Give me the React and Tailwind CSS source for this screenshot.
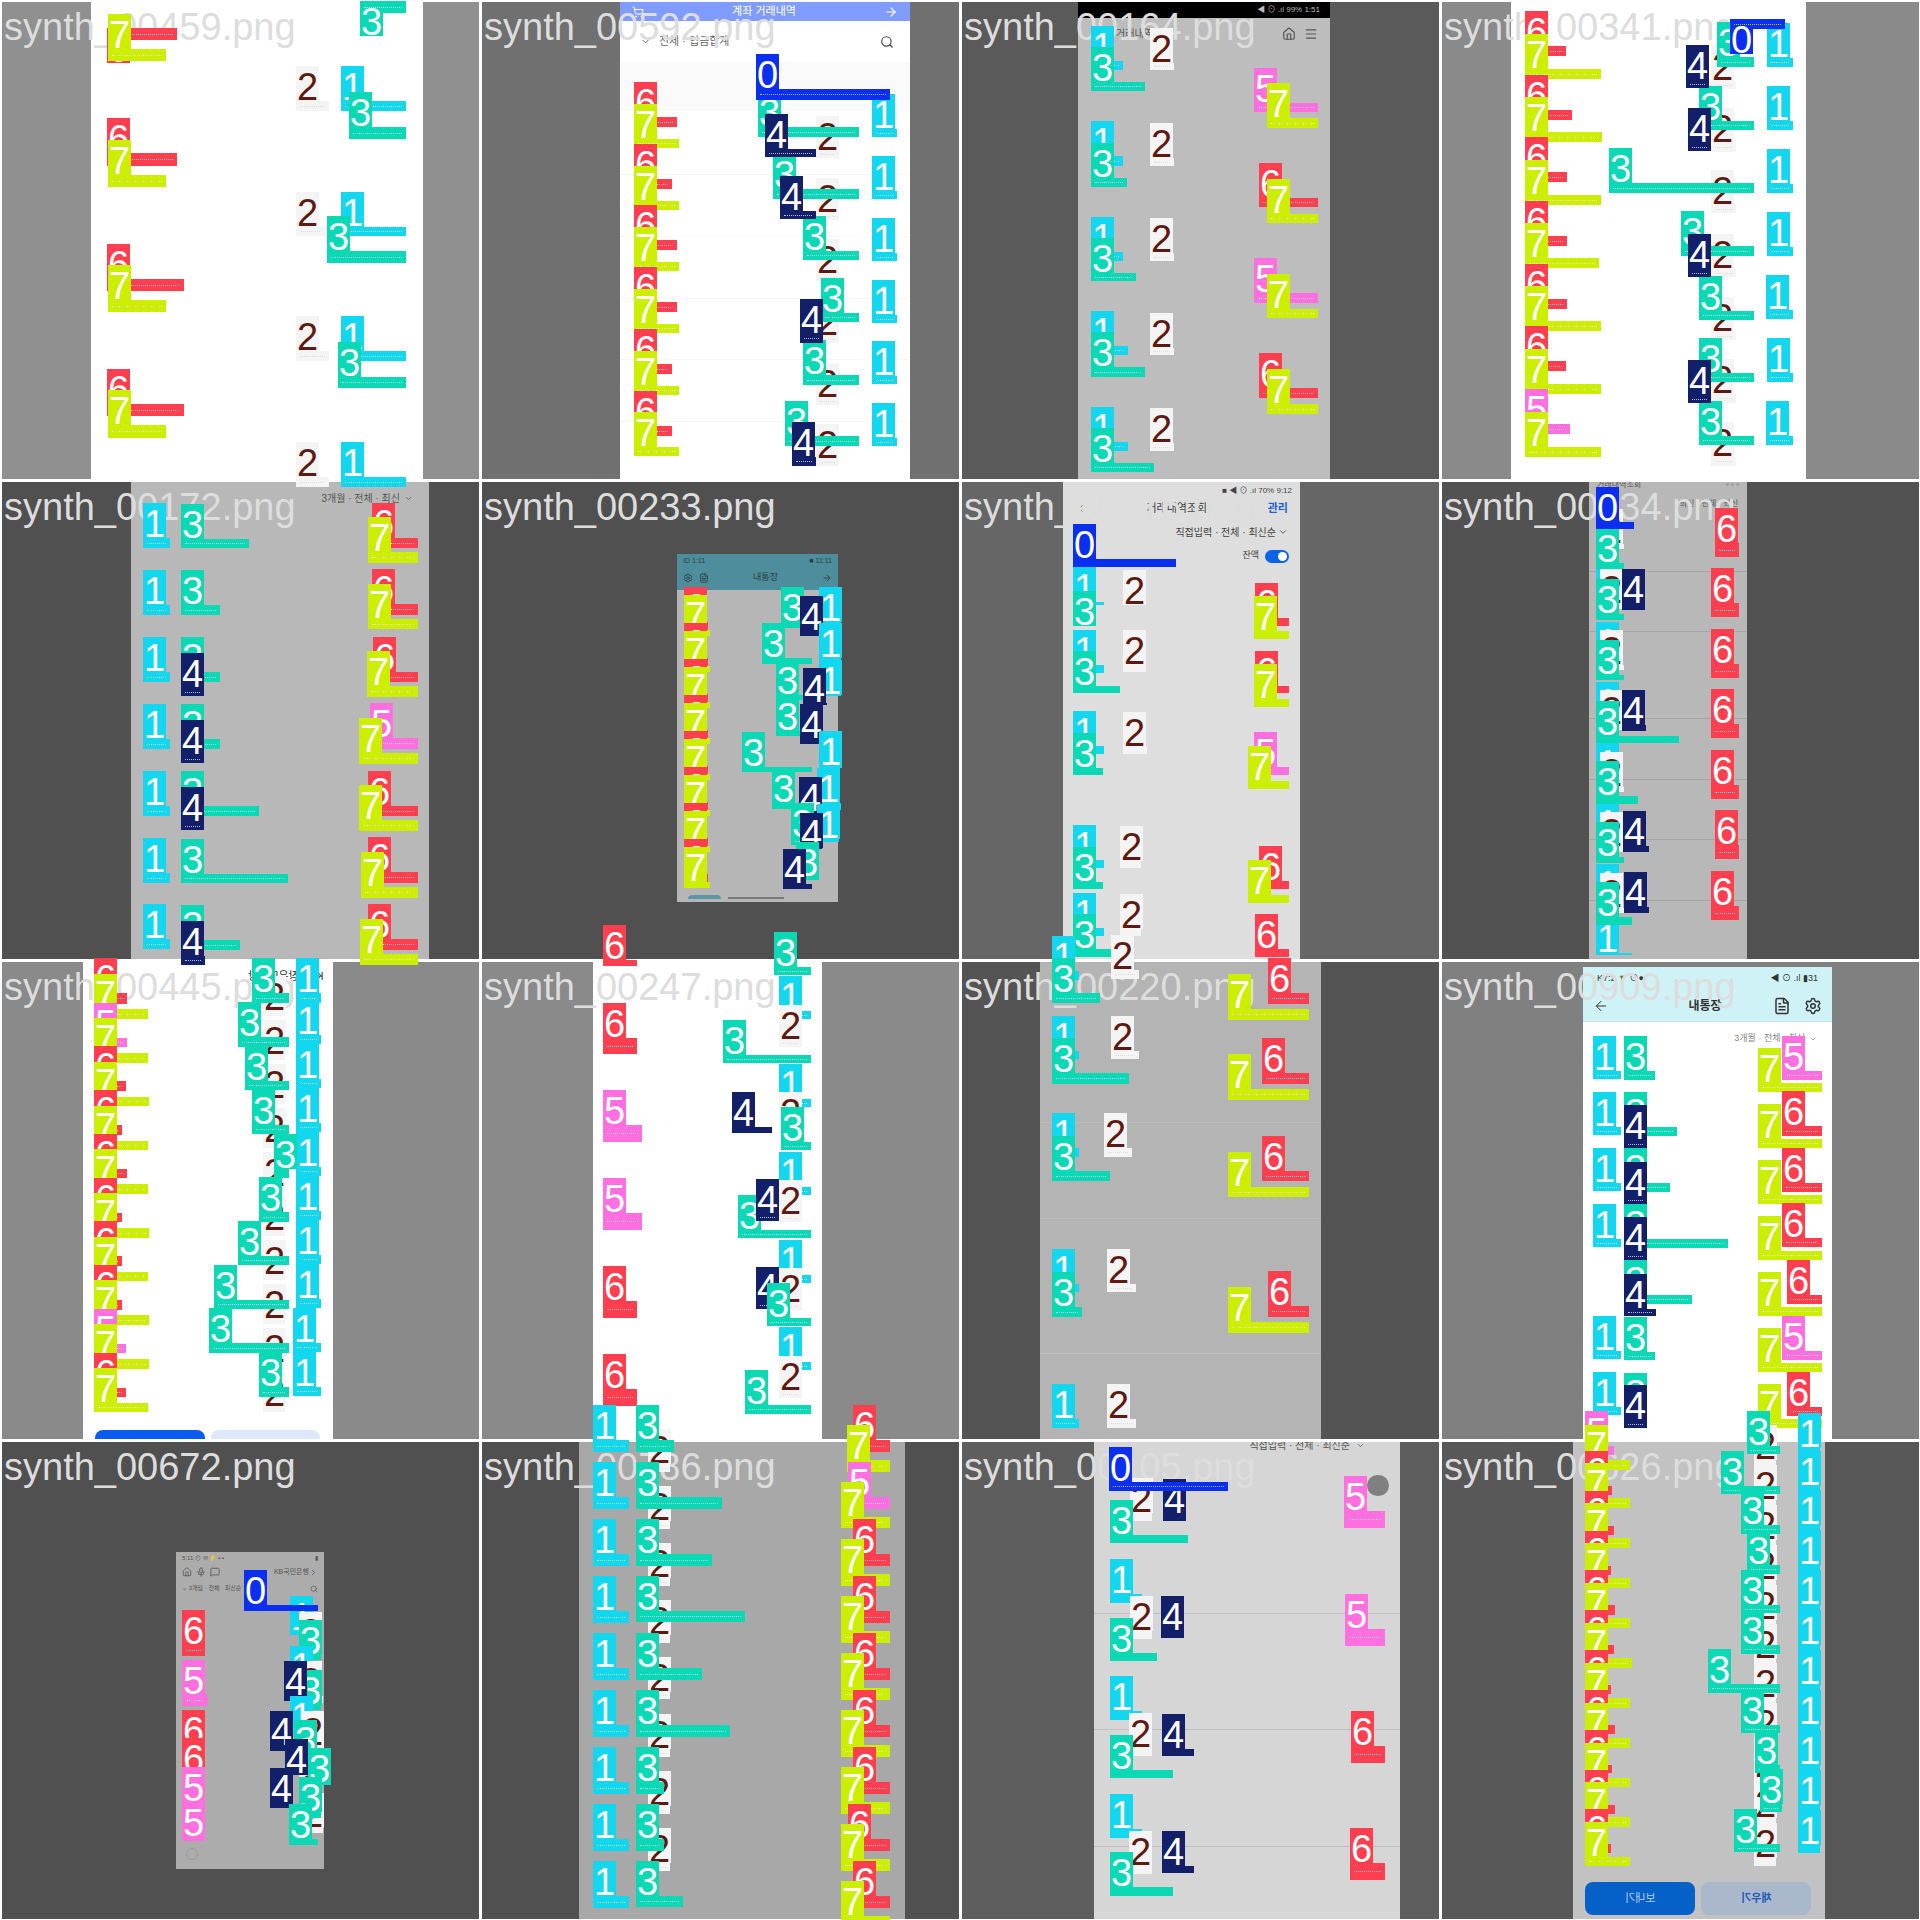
import React from "react";
import { Home, Menu, Search, ChevronDown, ChevronLeft, ChevronRight, ArrowLeft, ArrowRight, Settings, FileText, Mic, MessageSquare, ShoppingCart } from "lucide-react";

const COL = {
  0: "bg-[#0a2ff0] text-white",
  1: "bg-[#12d7ee] text-white",
  2: "bg-[#f4f4f4] text-[#5e1a10]",
  3: "bg-[#0bd9b5] text-white",
  4: "bg-[#132069] text-white",
  5: "bg-[#ff6fe0] text-white",
  6: "bg-[#ff3f50] text-white",
  7: "bg-[#ccee00] text-white",
};
const R = (n, x, tops, x2, h) => tops.map((t, i) => [n, Array.isArray(x) ? x[i] : x, t, Array.isArray(x2) ? x2[i] : x2, t + h]);
const Z = (a, b) => { const o = []; const m = Math.max(a.length, b.length); for (let i = 0; i < m; i++) { if (a[i]) o.push(a[i]); if (b[i]) o.push(b[i]); } return o; };

const GROUPS = [
  { ox: 0, oy: 0, sx: 3, ticks: () => true, L: [
    [6, 321, 85, 531, 122, 85], [7, 324, 42, 498, 182], [3, 1080, 3, 1218, 38, 3],
    [2, 888, 198, 987, 332], [1, 1023, 198, 1218, 332], [3, 1047, 276, 1218, 416],
    [6, 321, 354, 531, 497], [7, 324, 420, 498, 560],
    [2, 888, 576, 978, 708], [1, 1023, 576, 1218, 708], [3, 981, 648, 1218, 788],
    [6, 321, 732, 552, 872], [7, 324, 795, 498, 936],
    [2, 888, 948, 987, 1082], [1, 1023, 948, 1218, 1082], [3, 1014, 1026, 1218, 1163],
    [6, 321, 1107, 552, 1247], [7, 324, 1170, 498, 1313],
    [2, 888, 1326, 987, 1460], [1, 1023, 1326, 1218, 1460],
  ] },
  { ox: 480, oy: 0, sx: 3, ticks: () => true, L: [
    ...R(1, 1176, [282, 468, 654, 840, 1023, 1209], 1250, 128),
    ...R(2, 1008, [348, 534, 717, 903, 1089, 1272], 1078, 125),
    [3, 834, 276, 1137, 410], [3, 879, 462, 1137, 596], [3, 969, 648, 1137, 779], [3, 1023, 834, 1137, 965], [3, 969, 1020, 1137, 1154], [3, 915, 1203, 1137, 1337],
    [4, 855, 342, 1008, 470], [4, 900, 528, 1008, 656], [4, 960, 897, 1029, 1028], [4, 936, 1266, 1008, 1397],
    ...Z(R(6, 462, [246, 432, 615, 801, 987, 1173], [591, 576, 591, 591, 576, 576], 134), R(7, 462, [312, 498, 681, 867, 1053, 1236], 597, 133)),
    [0, 828, 162, 1230, 300],
  ] },
  { ox: 960, oy: 0, sx: 1.6333, ticks: () => true, L: [
    [1, 214, 78, 267, 210], [3, 214, 142, 302, 272], [2, 310, 84, 350, 210], [5, 480, 204, 585, 336], [7, 501, 248, 585, 383],
    [1, 214, 362, 267, 497], [3, 214, 428, 273, 560], [2, 310, 369, 350, 497], [6, 488, 489, 585, 621], [7, 501, 537, 585, 670],
    [1, 214, 651, 267, 783], [3, 214, 714, 287, 843], [2, 310, 654, 350, 783], [5, 480, 774, 585, 909], [7, 501, 822, 585, 953],
    [1, 214, 933, 274, 1065], [3, 214, 996, 302, 1130], [2, 310, 939, 350, 1065], [6, 488, 1059, 585, 1194], [7, 501, 1107, 585, 1241],
    [1, 214, 1221, 274, 1353], [3, 214, 1284, 317, 1415], [2, 310, 1224, 350, 1353],
    ...R(1, [1318, 1318, 1318, 1318, 1316, 1318, 1316], [69, 258, 447, 636, 825, 1014, 1203], 1361, 131),
    ...R(2, 1226, [137, 325, 510, 702, 890, 1078, 1267], 1267, 130),
    [3, 1236, 66, 1297, 200], [3, 1207, 258, 1297, 389], [3, 1060, 444, 1297, 578], [3, 1178, 633, 1297, 767], [3, 1207, 828, 1297, 959], [3, 1207, 1014, 1297, 1145], [3, 1207, 1203, 1297, 1334],
    [4, 1186, 135, 1224, 264], [4, 1189, 324, 1226, 453], [4, 1189, 702, 1226, 831], [4, 1189, 1080, 1226, 1209],
    ...Z(R(6, 923, [33, 225, 411, 603, 792, 978], [990, 1000, 991, 991, 991, 990], 135).concat([[5, 923, 1167, 996, 1302]]), R(7, 923, [102, 291, 480, 669, 858, 1047, 1236], [1047, 1049, 1047, 1044, 1047, 1047, 1047], 135)),
    [0, 1258, 57, 1347, 87, 57],
  ] },
  { ox: 0, oy: 480, sx: 1.6333, ticks: () => true, L: [
    ...R(1, 234, [69, 270, 471, 672, 873, 1074, 1272], 278, 135),
    [3, 296, 72, 407, 204], [3, 296, 270, 360, 405], [3, 296, 471, 360, 605], [3, 296, 672, 360, 806], [3, 296, 873, 423, 1007], [3, 296, 1077, 470, 1209], [3, 296, 1275, 392, 1410],
    [4, 296, 519, 333, 648], [4, 296, 720, 333, 849], [4, 296, 921, 333, 1050], [4, 296, 1323, 335, 1455],
    [6, 608, 69, 683, 204], [7, 601, 111, 683, 249], [6, 608, 267, 683, 405], [7, 601, 312, 683, 447], [6, 610, 471, 683, 605], [7, 599, 513, 683, 651],
    [5, 604, 669, 683, 807], [7, 586, 714, 683, 852], [6, 601, 873, 683, 1007], [7, 586, 915, 683, 1052], [6, 601, 1071, 683, 1209], [7, 589, 1116, 683, 1253], [6, 601, 1272, 683, 1410], [7, 588, 1317, 683, 1455],
    ...Z(R(6, 1117, [322, 430, 538, 645, 753, 862, 968, 1077], 1157, 130), R(7, 1117, [345, 453, 562, 670, 778, 886, 994, 1102], 1160, 122)),
    [3, 1276, 322, 1330, 445], [1, 1337, 322, 1373, 450], [4, 1307, 348, 1343, 468],
    [3, 1245, 430, 1326, 552], [1, 1337, 430, 1373, 555],
    [3, 1268, 540, 1343, 660], [1, 1337, 540, 1373, 648], [4, 1311, 564, 1350, 675],
    [3, 1268, 648, 1343, 768], [4, 1307, 672, 1343, 792],
    [3, 1212, 756, 1326, 876], [1, 1337, 753, 1375, 865],
    [3, 1261, 864, 1343, 986], [1, 1335, 865, 1373, 990], [4, 1305, 891, 1343, 1000],
    [3, 1292, 970, 1343, 1095], [1, 1335, 972, 1371, 1085], [4, 1307, 1000, 1343, 1108],
    [3, 1300, 1085, 1337, 1200], [4, 1279, 1107, 1326, 1226],
  ] },
  { ox: 960, oy: 480, sx: 1.6333, ticks: (n, x) => n === 6 && x > 1000, L: [
    [1, 185, 262, 235, 375], [2, 267, 270, 303, 375], [3, 185, 332, 242, 438], [6, 482, 308, 537, 438], [7, 480, 347, 537, 477],
    [1, 185, 450, 235, 578], [2, 267, 450, 303, 575], [3, 185, 514, 261, 639], [6, 482, 513, 537, 640], [7, 480, 552, 537, 681],
    [1, 185, 693, 235, 822], [2, 267, 696, 305, 822], [3, 185, 758, 234, 885], [5, 480, 756, 537, 885], [7, 470, 798, 537, 927],
    [1, 185, 1035, 235, 1164], [2, 261, 1038, 296, 1164], [3, 185, 1102, 234, 1227], [6, 488, 1098, 537, 1227], [7, 470, 1140, 537, 1269],
    [1, 185, 1239, 235, 1368], [2, 261, 1242, 296, 1368], [3, 185, 1302, 247, 1431], [6, 482, 1302, 537, 1431],
    [0, 185, 132, 353, 260],
    ...R(1, 1039, [80, 242, 425, 606, 789, 970, 1152], 1098, 91),
    [1, 1039, 1315, 1098, 1425],
    ...R(2, 1046, [88, 268, 450, 630, 815, 995, 1178], 1085, 120),
    [3, 1039, 145, 1085, 268], [3, 1039, 298, 1085, 420], [3, 1039, 480, 1085, 600], [3, 1039, 664, 1174, 790], [3, 1039, 843, 1108, 972], [3, 1039, 1025, 1085, 1150], [3, 1039, 1205, 1098, 1335],
    [4, 1081, 267, 1119, 390], [4, 1082, 630, 1120, 752], [4, 1083, 993, 1125, 1115], [4, 1085, 1176, 1125, 1299],
    [6, 1233, 84, 1272, 231], [6, 1227, 264, 1272, 411], [6, 1227, 447, 1272, 594], [6, 1227, 627, 1272, 774], [6, 1227, 810, 1272, 957], [6, 1233, 990, 1272, 1137], [6, 1227, 1173, 1272, 1320],
    [0, 1039, 21, 1101, 147],
  ] },
  { ox: 0, oy: 960, sx: 1.6333, ticks: () => true, L: [
    ...R(1, [483, 483, 483, 483, 483, 483, 483, 483, 479, 479], [-5, 120, 252, 384, 516, 648, 780, 912, 1044, 1176], 525, 133),
    ...R(2, 430, [47, 179, 311, 443, 575, 707, 839, 971, 1103, 1235], 466, 120),
    [3, 412, -5, 472, 128], [3, 389, 126, 472, 260], [3, 400, 258, 472, 390], [3, 412, 390, 472, 522], [3, 448, 522, 472, 654], [3, 423, 651, 472, 786], [3, 389, 783, 472, 915], [3, 350, 915, 472, 1047], [3, 341, 1044, 472, 1179], [3, 423, 1176, 472, 1310],
    [6, 154, -5, 207, 132], [7, 154, 42, 242, 177],
    [5, 154, 129, 207, 262], [7, 154, 174, 242, 309],
    [6, 154, 258, 206, 392], [7, 154, 306, 243, 438],
    [6, 154, 390, 200, 524], [7, 154, 438, 242, 570],
    [6, 154, 522, 207, 654], [7, 154, 567, 242, 702],
    [6, 154, 654, 200, 786], [7, 154, 699, 243, 834],
    [6, 154, 783, 200, 918], [7, 154, 831, 242, 963],
    [6, 154, 915, 200, 1050], [7, 154, 960, 243, 1095],
    [5, 154, 1047, 206, 1179], [7, 154, 1092, 243, 1227],
    [6, 154, 1179, 206, 1312], [7, 154, 1224, 242, 1356],
    ...R(1, 1272, [48, 312, 576, 840, 1101], 1325, 129),
    ...R(2, 1272, [135, 396, 660, 925, 1188], 1310, 125),
    [3, 1264, -84, 1325, 45], [3, 1181, 180, 1325, 309], [4, 1196, 396, 1261, 519], [3, 1276, 441, 1325, 570], [3, 1205, 705, 1325, 834], [4, 1235, 657, 1272, 782], [4, 1235, 921, 1272, 1047], [3, 1253, 969, 1325, 1098], [3, 1217, 1230, 1325, 1362],
    [6, 985, -105, 1040, 18], [6, 985, 129, 1040, 282], [5, 985, 390, 1049, 546], [5, 985, 654, 1049, 810], [6, 985, 918, 1040, 1074], [6, 985, 1182, 1040, 1338],
  ] },
  { ox: 960, oy: 960, sx: 1.6333, ticks: () => true, L: [
    [1, 150, -72, 195, 60], [2, 246, -75, 292, 57], [3, 150, -5, 229, 130], [6, 503, -7, 570, 131], [7, 438, 42, 570, 180],
    [1, 150, 168, 195, 297], [2, 246, 168, 292, 297], [3, 150, 234, 276, 372], [7, 438, 282, 570, 420], [6, 493, 234, 570, 372],
    [1, 150, 459, 195, 591], [2, 235, 459, 281, 591], [3, 150, 528, 245, 663], [7, 438, 576, 570, 711], [6, 493, 528, 570, 663],
    [1, 150, 867, 195, 996], [2, 240, 867, 287, 996], [3, 150, 936, 199, 1071], [7, 438, 981, 570, 1119], [6, 503, 933, 570, 1071],
    [1, 150, 1272, 195, 1404], [2, 240, 1272, 287, 1404],
    ...R(1, 1034, [228, 396, 564, 732, 1068, 1236], 1080, 130),
    [3, 1085, 228, 1135, 360], [3, 1085, 396, 1171, 527], [3, 1085, 564, 1160, 696], [3, 1085, 732, 1254, 864], [3, 1085, 900, 1196, 1032], [3, 1085, 1071, 1135, 1200], [3, 1085, 1239, 1122, 1370],
    [4, 1085, 435, 1122, 563], [4, 1085, 606, 1122, 731], [4, 1085, 771, 1122, 899], [4, 1085, 942, 1137, 1068], [4, 1085, 1275, 1122, 1403],
    ...R(7, 1303, [264, 432, 600, 768, 936, 1104, 1272], 1408, 132),
    [5, 1343, 228, 1408, 360], [6, 1343, 393, 1408, 528], [6, 1343, 564, 1408, 696], [6, 1343, 729, 1408, 861], [6, 1351, 900, 1408, 1032], [5, 1343, 1068, 1408, 1200], [6, 1351, 1236, 1408, 1368],
  ] },
  { ox: 0, oy: 1440, sx: 1.6333, ticks: () => true, L: [
    [1, 474, 468, 511, 586], [2, 488, 516, 525, 640], [3, 488, 540, 525, 660],
    [1, 474, 618, 511, 735], [2, 488, 662, 527, 790], [3, 488, 690, 525, 810], [4, 464, 663, 501, 782],
    [1, 474, 768, 511, 885], [2, 491, 813, 529, 925], [3, 480, 840, 505, 930], [4, 441, 813, 479, 933],
    [2, 488, 985, 525, 1100], [3, 503, 924, 541, 1035], [4, 466, 897, 503, 1005],
    [2, 491, 1060, 528, 1180], [3, 488, 1011, 525, 1135], [4, 441, 984, 479, 1103], [3, 472, 1092, 519, 1215],
    [0, 399, 390, 519, 513],
    [6, 298, 510, 335, 648], [5, 298, 660, 340, 798], [6, 298, 810, 335, 920], [6, 298, 895, 335, 1000], [5, 298, 980, 335, 1110], [5, 298, 1085, 335, 1202],
    ...R(1, 968, [-105, 66, 237, 408, 579, 750, 921, 1092, 1263], 1028, 141),
    ...R(2, 1058, [-33, 138, 310, 480, 650, 822, 993, 1164], 1094, 128),
    [3, 1039, -105, 1101, 36], [3, 1039, 66, 1179, 207], [3, 1039, 237, 1163, 378], [3, 1039, 408, 1217, 546], [3, 1039, 579, 1147, 720], [3, 1039, 750, 1192, 891], [3, 1039, 921, 1085, 1062], [3, 1039, 1092, 1085, 1233], [3, 1039, 1263, 1116, 1401],
    [6, 1393, -105, 1454, 36], [7, 1383, -45, 1454, 95], [5, 1385, 66, 1454, 207], [7, 1373, 125, 1454, 265],
    [6, 1393, 237, 1454, 378], [7, 1373, 297, 1454, 437], [6, 1393, 408, 1454, 549], [7, 1373, 468, 1454, 608], [6, 1393, 579, 1454, 720], [7, 1373, 639, 1454, 779],
    [6, 1393, 750, 1454, 891], [7, 1373, 810, 1454, 950], [6, 1393, 921, 1454, 1062], [7, 1373, 981, 1454, 1121], [6, 1385, 1092, 1454, 1233], [7, 1373, 1152, 1454, 1292], [6, 1393, 1263, 1454, 1404], [7, 1373, 1323, 1454, 1458],
  ] },
  { ox: 960, oy: 1440, sx: 1.6333, ticks: (n, x) => x > 1000 ? n === 3 || n === 7 : n === 0 || n === 5 || n === 6, L: [
    ...R(1, 245, [357, 708, 1062], 297, 132),
    ...R(2, [278, 278, 276, 276], [114, 468, 819, 1173], 314, 129),
    [3, 245, 180, 372, 309], [3, 245, 534, 322, 663], [3, 245, 885, 348, 1014], [3, 245, 1236, 348, 1368],
    [4, 331, 117, 369, 243], [4, 328, 468, 366, 594], [4, 330, 822, 382, 948], [4, 330, 1173, 382, 1299],
    [5, 627, 108, 694, 264], [5, 629, 462, 694, 618], [6, 639, 813, 694, 969], [6, 637, 1164, 694, 1320],
    [0, 243, 21, 438, 152],
    ...R(1, 1368, [-80, 33, 150, 270, 390, 510, 630, 750, 870, 990, 1110], 1405, 128),
    ...R(2, 1297, [-45, 75, 195, 315, 435, 553, 670, 790, 910, 1030, 1150], 1333, 128),
    [3, 1285, -87, 1340, 42], [3, 1243, 33, 1340, 162], [3, 1276, 150, 1340, 282], [3, 1285, 270, 1340, 402], [3, 1276, 390, 1340, 519], [3, 1276, 510, 1340, 642], [3, 1222, 627, 1340, 759], [3, 1276, 750, 1340, 879], [3, 1298, 870, 1340, 1000], [3, 1307, 987, 1343, 1116], [3, 1264, 1107, 1340, 1236],
    [5, 1021, -87, 1068, 45], [7, 1021, -45, 1094, 90],
    [6, 1021, 33, 1065, 165], [7, 1021, 70, 1094, 205],
    [6, 1021, 153, 1068, 285], [7, 1021, 190, 1094, 325],
    [6, 1021, 273, 1063, 405], [7, 1021, 310, 1094, 445],
    [6, 1021, 390, 1070, 525], [7, 1021, 430, 1094, 565],
    [6, 1021, 510, 1068, 642], [7, 1021, 550, 1097, 685],
    [6, 1021, 630, 1063, 762], [7, 1021, 668, 1094, 803],
    [6, 1021, 750, 1070, 882], [7, 1021, 788, 1094, 923],
    [6, 1021, 870, 1065, 1000], [7, 1021, 908, 1094, 1042],
    [6, 1021, 990, 1070, 1122], [7, 1021, 1027, 1094, 1160],
    [6, 1021, 1108, 1063, 1240], [7, 1021, 1145, 1094, 1278],
  ] },
];

function Label({ d, g }) {
  const [n, x1, top, x2, y2, bt] = d;
  const left = Math.round(x1 / g.sx + g.ox);
  const tagTop = Math.round(top / 3 + g.oy);
  const barTop = bt !== undefined ? bt / 3 + g.oy : tagTop + 35;
  const barH = Math.max(0, Math.round(y2 / 3 + g.oy - barTop));
  const barW = Math.max(0, Math.round(x2 / g.sx + g.ox - left));
  const inside = bt !== undefined;
  return (
    <div className="absolute" style={{ left, top: tagTop }}>
      <div className={`w-[23px] h-[35px] overflow-hidden text-center text-[38px] leading-[35px] pt-[4px] ${COL[n]}`}>{n}</div>
      <div className={`flex items-center ${COL[n]}`} style={{ width: barW, height: barH, marginTop: inside ? -35 : 0 }}>
        {g.ticks(n, x1) && barH >= 7 && barW >= 16 ? (
          <div className={`grow mx-[4px] border-t border-dotted ${n === 2 ? "border-[#dddddd]" : "border-white/70"}`} />
        ) : null}
      </div>
    </div>
  );
}

const Rules = ({ ys, cls }) => ys.map((y) => <div key={y} className={`absolute left-0 right-0 h-px ${cls}`} style={{ top: y }} />);

const TILES = [
  { name: "synth_00459.png", outer: "bg-[#909090]", screen: "ml-[89px] w-[332px] bg-white" },
  { name: "synth_00592.png", outer: "bg-[#707070]", screen: "ml-[138px] w-[290px] bg-white", body: (
    <>
      <div className="h-[19px] bg-[#819cff] flex items-center justify-between px-[12px] text-white text-[11px]"><ShoppingCart size={12} /><span>계좌 거래내역</span><ArrowRight size={14} /></div>
      <div className="h-[41px] flex items-center justify-between pl-[20px] pr-[16px] text-[#666666] text-[11px]"><span className="flex items-center gap-[8px]"><ChevronDown size={11} />전체 · 입금합계</span><Search size={14} className="text-[#444444]" /></div>
      <div className="h-[49px] bg-[#fafafa]" />
      <Rules ys={[172, 234, 296, 357, 419]} cls="bg-[#f6f6f6]" />
    </>
  ) },
  { name: "synth_00164.png", outer: "bg-[#5a5a5a]", screen: "ml-[116px] w-[252px] bg-[#bdbdbd]", body: (
    <>
      <div className="h-[16px] bg-black flex items-center justify-end pr-[10px] text-[#bbbbbb] text-[8px]">◀ ⊙ .ıl 99% 1:51</div>
      <div className="h-[31px] flex items-center justify-between pl-[38px] pr-[12px] text-[#555555] text-[10px]"><span>거래내역</span><span className="flex items-center gap-[8px]"><Home size={14} /><Menu size={14} /></span></div>
    </>
  ) },
  { name: "synth_00341.png", outer: "bg-[#8a8a8a]", screen: "ml-[69px] w-[295px] bg-white" },
  { name: "synth_00172.png", outer: "bg-[#505050]", screen: "ml-[129px] w-[298px] bg-[#b8b8b8]", body: (
    <div className="pt-[9px] pr-[16px] flex items-center justify-end text-[#555555] text-[10px]">3개월 · 전체 · 최신<ChevronDown size={9} className="ml-[4px]" /></div>
  ) },
  { name: "synth_00233.png", outer: "bg-[#505050]", screen: "ml-[195px] mt-[72px] w-[161px] h-[348px] bg-[#b6b6b6] flex flex-col", body: (
    <>
      <div className="h-[36px] bg-[#4e8d9b] px-[6px] text-[#2c3e44] text-[7px]">
        <div className="h-[15px] flex items-center justify-between"><span>ID 1:11</span><span>■ 11:11</span></div>
        <div className="h-[18px] flex items-center justify-between text-[9px]"><span className="flex gap-[6px]"><Settings size={10} /><FileText size={10} /></span><span>내통장</span><ArrowRight size={10} /></div>
      </div>
      <div className="mt-auto mb-[3px] flex items-end gap-[7px] pl-[11px]"><div className="w-[33px] h-[4px] rounded-t bg-[#5b97a6]" /><div className="w-[56px] h-[2px] bg-[#777777]" /></div>
    </>
  ) },
  { name: "synth_00716.png", outer: "bg-[#666666]", screen: "ml-[101px] w-[237px] bg-[#dedede] text-[#444444]", body: (
    <>
      <div className="h-[14px] pt-[3px] pr-[8px] flex justify-end text-[8px]">■ ◀ ⊙ .ıl 70% 9:12</div>
      <div className="h-[24px] flex items-center justify-between pl-[12px] pr-[12px] text-[11px]"><ChevronLeft size={11} /><span>거래내역조회</span><span className="text-[#1c5fd8] font-bold">관리</span></div>
      <div className="h-[24px] flex items-center justify-end pr-[12px] text-[10px]">직접입력 · 전체 · 최신순<ChevronDown size={10} className="ml-[2px]" /></div>
      <div className="h-[24px] flex items-center justify-end pr-[11px] gap-[6px] text-[9px]">잔액<span className="w-[24px] h-[13px] rounded-full bg-[#0a63e8] flex justify-end p-[2px]"><span className="w-[9px] h-[9px] rounded-full bg-white" /></span></div>
    </>
  ) },
  { name: "synth_00034.png", outer: "bg-[#525252]", screen: "ml-[147px] w-[158px] bg-[#b8b8b8] text-[#555555]", body: (
    <>
      <div className="h-[8px] flex justify-between px-[8px] text-[8px] leading-[6px]"><span>거래내역조회</span><span>▫ ▫ ▫</span></div>
      <div className="pt-[8px] pr-[9px] text-right text-[8px]">최신 · 전체 · 최신</div>
      <Rules ys={[89, 149, 236, 297, 357, 418]} cls="bg-[#a6a6a6]" />
    </>
  ) },
  { name: "synth_00445.png", outer: "bg-[#8a8a8a]", screen: "ml-[81px] w-[250px] bg-white flex flex-col", body: (
    <>
      <div className="pt-[6px] pr-[10px] flex items-center justify-end text-[#333333] text-[11px]"><span className="scale-x-[-1]">KB사장우대통장</span></div>
      <div className="mt-auto flex gap-[6px] pl-[12px] h-[9px] overflow-hidden"><div className="w-[110px] h-[30px] rounded-[8px] bg-[#0a5cf0]" /><div className="w-[109px] h-[30px] rounded-[8px] bg-[#dde8fb]" /></div>
    </>
  ) },
  { name: "synth_00247.png", outer: "bg-[#8a8a8a]", screen: "ml-[111px] w-[229px] bg-white" },
  { name: "synth_00220.png", outer: "bg-[#545454]", screen: "ml-[78px] w-[281px] bg-[#b4b4b4]", body: <Rules ys={[160, 256, 391]} cls="bg-[#bcbcbc]" /> },
  { name: "synth_00909.png", outer: "bg-[#808080]", screen: "ml-[141px] mt-[5px] w-[249px] bg-white", body: (
    <>
      <div className="h-[55px] bg-[#cff2f6] border-b border-[#bfe3e7] text-[#333333]">
        <div className="h-[24px] flex items-center justify-between px-[14px] text-[9px]"><span>K7:2 <span className="text-[#7a6a20]">▼</span> ⊙●</span><span>◀ ⊙ .ıl ▮31</span></div>
        <div className="h-[30px] flex items-center justify-between pl-[10px] pr-[10px] text-[12px] font-bold"><ArrowLeft size={16} strokeWidth={1.5} /><span className="ml-[28px]">내통장</span><span className="flex items-center gap-[13px]"><FileText size={18} /><Settings size={18} /></span></div>
      </div>
      <div className="pt-[10px] pr-[15px] flex items-center justify-end text-[#888888] text-[9px]">3개월 · 전체 · 최신<ChevronDown size={8} className="ml-[4px]" /></div>
    </>
  ) },
  { name: "synth_00672.png", outer: "bg-[#505050]", screen: "ml-[174px] mt-[110px] w-[148px] h-[317px] bg-[#acacac] text-[#555555] flex flex-col", body: (
    <>
      <div className="h-[12px] pt-[2px] px-[6px] flex justify-between text-[6px]"><span>5:11 ⊙ ✉ ⚡ ▪ ▪</span><span>▮</span></div>
      <div className="h-[16px] flex items-center justify-between px-[6px] text-[7px]"><span className="flex gap-[4px]"><Home size={10} /><Mic size={10} /><MessageSquare size={10} /></span><span className="flex items-center">KB국민은행<ChevronRight size={9} /></span></div>
      <div className="h-[17px] flex items-center justify-between px-[6px] text-[6px]"><span>⌄ 3개월 · 전체 · 최신순</span><Search size={8} /></div>
      <div className="mt-auto mb-[9px] ml-[10px] w-[12px] h-[12px] rounded-full border border-[#999999]" />
    </>
  ) },
  { name: "synth_00786.png", outer: "bg-[#505050]", screen: "ml-[97px] w-[326px] bg-[#a8a8a8]" },
  { name: "synth_00105.png", outer: "bg-[#5e5e5e]", screen: "ml-[132px] w-[306px] bg-[#d6d6d6] text-[#555555]", body: (
    <>
      <div className="pr-[35px] flex items-center justify-end text-[10px] leading-[7px] h-[7px]">직접입력 · 전체 · 최신순<ChevronDown size={9} className="ml-[6px]" /></div>
      <Rules ys={[171, 287, 404]} cls="bg-[#c0c0c0]" />
      <div className="absolute left-[273px] top-[33px] w-[22px] h-[21px] rounded-full bg-[#808080]" />
    </>
  ) },
  { name: "synth_00626.png", outer: "bg-[#585858]", screen: "ml-[131px] w-[252px] bg-[#c2c2c2] flex flex-col", body: (
    <div className="mt-auto mb-[4px] flex gap-[6px] px-[12px]">
      <div className="w-[110px] h-[33px] rounded-[8px] bg-[#0560c8] flex items-center justify-center text-[#b5cfee] text-[11px]"><span className="scale-x-[-1]">보내기</span></div>
      <div className="w-[110px] h-[33px] rounded-[8px] bg-[#aab8cc] flex items-center justify-center text-[#1c5fb8] text-[11px] font-bold"><span className="scale-x-[-1]">채우기</span></div>
    </div>
  ) },
];

export default function App() {
  return (
    <div className="relative w-[1920px] h-[1920px] bg-white overflow-hidden font-['Liberation_Sans','Noto_Sans_CJK_KR',sans-serif]">
      <div className="grid grid-cols-[repeat(4,480px)] grid-rows-[repeat(4,480px)]">
        {TILES.map((t) => (
          <div key={t.name} className="pl-[2px] pt-[2px] pr-[1px] pb-[1px]">
            <div className={`relative flex w-[477px] h-[477px] overflow-hidden ${t.outer}`}>
              <div className={`relative shrink-0 overflow-hidden ${t.screen}`}>{t.body}</div>
              <div className="absolute left-[2px] top-[6px] text-[38px] leading-[38px] text-[#dddddd] whitespace-nowrap">{t.name}</div>
            </div>
          </div>
        ))}
      </div>
      <div className="absolute inset-0 overflow-hidden">
        {GROUPS.map((g, i) => g.L.map((d, j) => <Label key={`${i}-${j}`} d={d} g={g} />))}
      </div>
    </div>
  );
}
